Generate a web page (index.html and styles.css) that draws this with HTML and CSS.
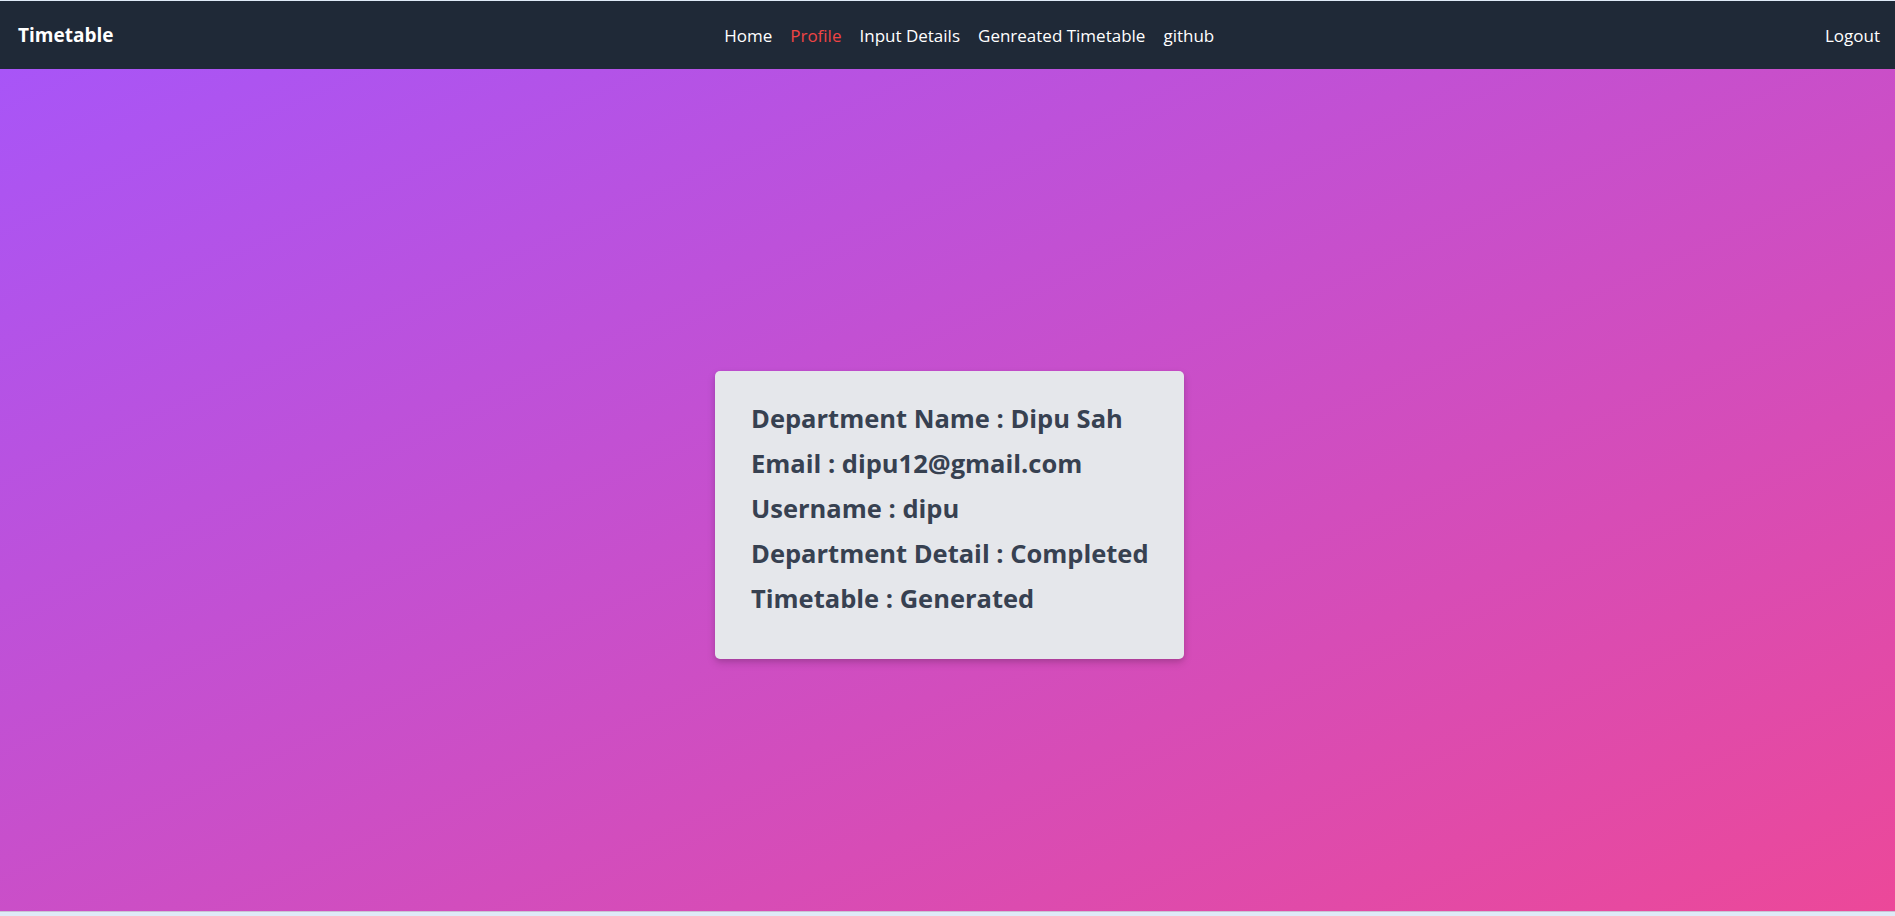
FILE: index.html
```html
<!DOCTYPE html>
<html lang="en">
<head>
<meta charset="utf-8">
<title>Timetable - Profile</title>
<link rel="stylesheet" href="styles.css">
</head>
<body>
  <nav class="navbar">
    <a class="brand" href="#">Timetable</a>
    <ul class="nav-links">
      <li><a href="#">Home</a></li>
      <li><a class="active" href="#">Profile</a></li>
      <li><a href="#">Input Details</a></li>
      <li><a href="#">Genreated Timetable</a></li>
      <li><a href="#">github</a></li>
    </ul>
    <a class="logout" href="#">Logout</a>
  </nav>
  <main class="hero">
    <section class="card">
      <h2 class="row">Department Name : Dipu Sah</h2>
      <h2 class="row">Email : dipu12@gmail.com</h2>
      <h2 class="row">Username : dipu</h2>
      <h2 class="row">Department Detail : Completed</h2>
      <h2 class="row">Timetable : Generated</h2>
    </section>
  </main>
</body>
</html>
```

FILE: styles.css
```css
* { box-sizing: border-box; }
html, body { margin: 0; padding: 0; }
body {
  background: #dfeaf7;
  font-family: "Open Sans", "Noto Sans", "Liberation Sans", sans-serif;
  padding-top: 1px;
}
.navbar {
  height: 68px;
  background: #1f2937;
  display: flex;
  align-items: center;
  justify-content: space-between;
  padding: 0 15px 0 18px;
}
.brand {
  color: #ffffff;
  font-weight: 700;
  font-size: 19px;
  text-decoration: none;
}
.nav-links {
  list-style: none;
  margin: 0;
  padding: 0;
  display: flex;
  gap: 18px;
}
.nav-links a, .logout {
  color: #ffffff;
  font-size: 17px;
  text-decoration: none;
}
.nav-links a.active { color: #ef4444; }
.hero {
  height: 843px;
  background: linear-gradient(to bottom right, #a855f7, #ec4899);
  display: flex;
  align-items: center;
  justify-content: center;
  padding-left: 4px;
  padding-top: 50px;
  border-bottom: 1px solid #c9c3d3;
}
.card {
  width: 469px;
  height: 288px;
  background: #e5e7eb;
  border-radius: 5px;
  box-shadow: 0 4px 8px rgba(0,0,0,0.15), 0 2px 4px rgba(0,0,0,0.08);
  padding: 31px 36px 28px;
  display: flex;
  flex-direction: column;
  gap: 13px;
}
.row {
  margin: 0;
  font-size: 25.5px;
  line-height: 32px;
  font-weight: 700;
  color: #374151;
  white-space: nowrap;
}
```
